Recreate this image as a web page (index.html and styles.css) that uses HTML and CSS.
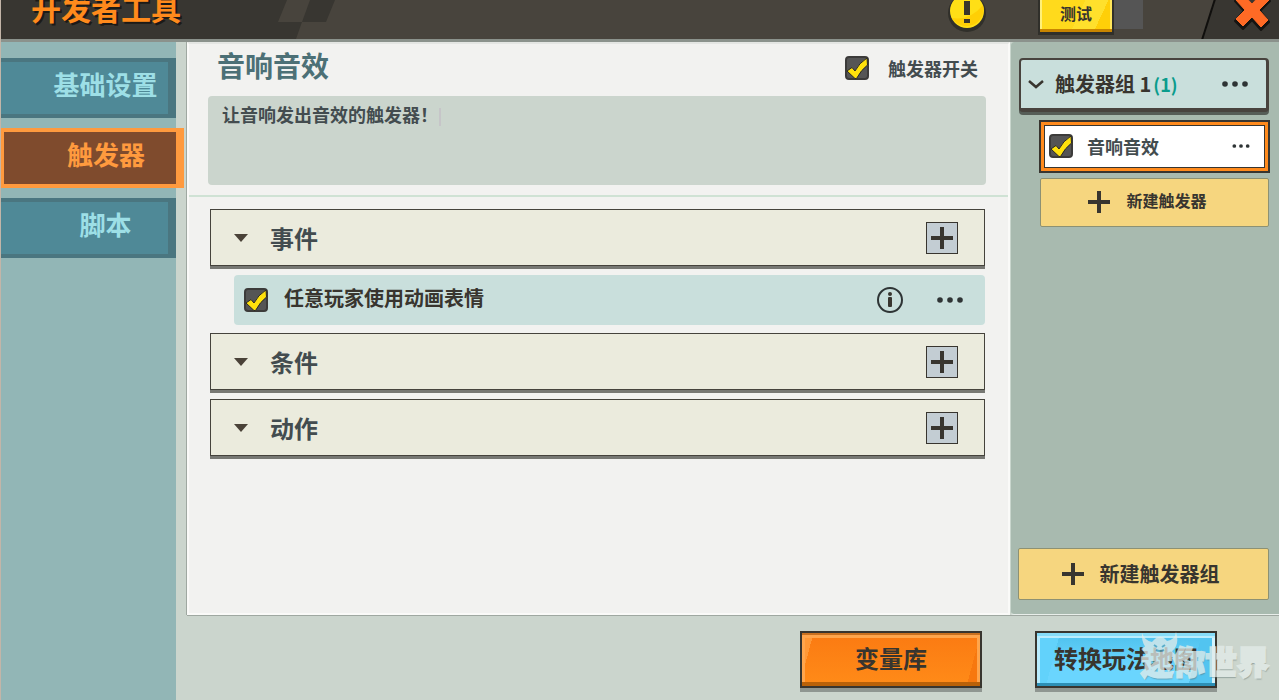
FILE: index.html
```
<!DOCTYPE html>
<html lang="zh-CN">
<head>
  <meta charset="UTF-8">
  <meta name="viewport" content="width=device-width, initial-scale=1.0">
  <title>开发者工具</title>
  <link rel="stylesheet" href="styles.css">
</head>
<body>
  <svg class="symbols" aria-hidden="true">
    <symbol id="tick" viewBox="0 0 24 24">
      <path d="M2 15L7 11.500L10 15Q14 7 22 2L22.500 9Q16 14 11.500 22.500L10 22.500Z" fill="#ffe10c" stroke="#2b2a26" stroke-width="1"/>
    </symbol>
    <symbol id="plus" viewBox="0 0 22 22">
      <path d="M9 0h4v9h9v4h-9v9h-4v-9H0V9h9z" fill="#38352f"/>
    </symbol>
    <symbol id="dots" viewBox="0 0 26 6">
      <circle cx="3" cy="3" r="2.800"/><circle cx="13" cy="3" r="2.800"/><circle cx="23" cy="3" r="2.800"/>
    </symbol>
    <symbol id="arrow" viewBox="0 0 14 8">
      <path d="M0 0h14L7 8z" fill="#4a4238"/>
    </symbol>
  </svg>

  <header class="topbar">
    <svg class="topbar-left" viewBox="0 0 334 39" aria-hidden="true">
      <path d="M0 0H286L277 22H301L309 0H334L325 22H301L295 39H0z" fill="#383631"/>
    </svg>
    <svg class="topbar-right" viewBox="0 0 78 39" aria-hidden="true">
      <path d="M14 0H78V39H1z" fill="#383631"/>
      <path d="M14 -1L1 40" stroke="#100f0d" stroke-width="2"/>
    </svg>
    <h1>开发者工具</h1>
    <div class="topbar-tools">
      <button type="button" class="alert-btn" aria-label="提示">
        <svg width="38" height="42" viewBox="0 0 38 42">
          <circle cx="19" cy="22" r="19" fill="#302f2a"/>
          <circle cx="19" cy="20" r="17" fill="#ffdf16"/>
          <path d="M4 27A17 17 0 0 0 35 14Q22 30 4 27z" fill="#ffcf05"/>
          <path d="M16 10h6v14h-6zM16 28h6v4h-6z" fill="#39352b"/>
        </svg>
      </button>
      <div class="test-slot">
        <button type="button" class="test-btn">测试</button>
      </div>
      <button type="button" class="close-btn" aria-label="关闭">
        <svg width="38" height="40" viewBox="0 0 38 40">
          <path d="M9 3L19 14L29 3L37 10L27 20L36 31L28 39L19 29L10 38L2 30L11 20L2 10z" fill="#151412" stroke="#151412" stroke-width="2" stroke-linejoin="round"/>
          <path d="M9 2L19 13L29 2L36 9L26 19L35 29L28 36L19 26L10 35L3 28L12 19L3 9z" fill="#ff6a25" stroke="#ff6a25" stroke-width="1" stroke-linejoin="round"/>
        </svg>
      </button>
    </div>
  </header>

  <div class="layout">
    <nav class="sidebar">
      <a href="#" class="nav-item">基础设置</a>
      <a href="#" class="nav-item active">触发器</a>
      <a href="#" class="nav-item">脚本</a>
    </nav>

    <div class="content">
      <div class="panels">
        <main class="editor">
          <div class="editor-head">
            <div class="editor-title">
              <h2>音响音效</h2>
              <label class="switch">
                <span class="check"><input type="checkbox" checked><svg><use href="#tick"/></svg></span>
                触发器开关
              </label>
            </div>
            <div class="desc">
              <textarea aria-label="触发器描述" spellcheck="false">让音响发出音效的触发器！</textarea>
              <span class="caret"></span>
            </div>
          </div>

          <div class="sections">
            <section class="section">
              <svg class="arrow"><use href="#arrow"/></svg>
              <h3>事件</h3>
              <button type="button" class="add-btn" aria-label="添加事件"><svg><use href="#plus"/></svg></button>
            </section>
            <div class="event">
              <label>
                <span class="check"><input type="checkbox" checked><svg><use href="#tick"/></svg></span>
                <span class="event-name">任意玩家使用动画表情</span>
              </label>
              <button type="button" class="icon-btn" aria-label="说明">
                <svg width="26" height="26" viewBox="0 0 26 26">
                  <circle cx="13" cy="13" r="12" fill="none" stroke="#2e3435" stroke-width="2"/>
                  <circle cx="13" cy="7" r="2" fill="#38352f"/>
                  <rect x="11" y="10" width="4" height="10" rx="1" fill="#38352f"/>
                </svg>
              </button>
              <button type="button" class="icon-btn" aria-label="更多"><svg class="dots"><use href="#dots"/></svg></button>
            </div>
            <section class="section">
              <svg class="arrow"><use href="#arrow"/></svg>
              <h3>条件</h3>
              <button type="button" class="add-btn" aria-label="添加条件"><svg><use href="#plus"/></svg></button>
            </section>
            <section class="section">
              <svg class="arrow"><use href="#arrow"/></svg>
              <h3>动作</h3>
              <button type="button" class="add-btn" aria-label="添加动作"><svg><use href="#plus"/></svg></button>
            </section>
          </div>
        </main>

        <aside class="groups">
          <div class="group-head">
            <svg width="16" height="10" viewBox="0 0 16 10"><path d="M1 2L8 8L15 2" fill="none" stroke="#38352f" stroke-width="2.500"/></svg>
            <h3>触发器组 1<span class="count">(1)</span></h3>
            <button type="button" class="icon-btn" aria-label="更多"><svg class="dots"><use href="#dots"/></svg></button>
          </div>
          <div class="trigger">
            <label>
              <span class="check"><input type="checkbox" checked><svg><use href="#tick"/></svg></span>
              音响音效
            </label>
            <button type="button" class="icon-btn" aria-label="更多"><svg class="dots small"><use href="#dots"/></svg></button>
          </div>
          <button type="button" class="new-btn new-trigger"><svg><use href="#plus"/></svg><span>新建触发器</span></button>
          <button type="button" class="new-btn new-group"><svg><use href="#plus"/></svg>新建触发器组</button>
        </aside>
      </div>

      <footer class="actions">
        <button type="button" class="action-btn orange">变量库</button>
        <button type="button" class="action-btn blue">转换玩法地图</button>
      </footer>
    </div>
  </div>

  <div class="watermark" aria-hidden="true">
    <svg width="38" height="26" viewBox="0 0 38 26">
      <path d="M1 1Q4 9 11 10Q19 0 26 9Q34 8 35 0Q39 13 31 19L36 25H3L8 19Q0 12 1 1z"/>
      <path class="face" d="M13 13l3 2M24 13l-3 2M15 18q4 2 8 0"/>
    </svg>
    <span>迷你世界</span>
  </div>
</body>
</html>
```
FILE: styles.css
```
* {
  margin: 0;
  padding: 0;
  box-sizing: border-box;
}

body {
  font-family: "Noto Sans CJK SC", sans-serif;
  font-weight: 700;
  color: #38352f;
  background: #cbd5cd;
  border-left: 1px solid #c3b5a8;
  min-height: 100vh;
  display: flex;
  flex-direction: column;
  position: relative;
}

h1,
h2,
h3 {
  font-weight: 700;
}

button {
  font: inherit;
  color: inherit;
  border: none;
  background: none;
  cursor: pointer;
}

.symbols {
  position: absolute;
  width: 0;
  height: 0;
}

/* Top bar */
.topbar {
  height: 39px;
  background: #48443d;
  display: flex;
  align-items: flex-end;
  justify-content: space-between;
  overflow: hidden;
  position: relative;
}

.topbar-left,
.topbar-right {
  position: absolute;
  top: 0;
  height: 39px;
}

.topbar-left {
  left: 0;
  width: 334px;
}

.topbar-right {
  right: 0;
  width: 78px;
}

.topbar h1 {
  position: relative;
  color: #ff8a1c;
  font-size: 30px;
  line-height: 30px;
  padding: 0 0 17px 30px;
  text-shadow: 2px 2px 0 #1c1a17;
}

.topbar-tools {
  position: relative;
  display: flex;
  align-items: flex-end;
  padding-right: 8px;
}

.alert-btn {
  height: 42px;
  margin: 0 52px 6px 0;
}

.test-slot {
  width: 105px;
  height: 48px;
  margin: 0 90px 4px 0;
  background: linear-gradient(#555, #555) 0 0 / 100% 42px no-repeat;
  border-radius: 3px;
}

.test-btn {
  width: 76px;
  height: 48px;
  font-size: 16px;
  line-height: 16px;
  padding-top: 4px;
  border: 2px solid #302f2a;
  border-bottom-width: 3px;
  background: linear-gradient(115deg, #ffda1c 55%, #ffe02c 55%, #ffe02c 80%, #ffcf08 80%);
  box-shadow: inset 0 -3px 0 #c98500, inset 2px 0 0 #fff07a, inset -2px 0 0 #ffe65a;
}

.close-btn {
  height: 40px;
  margin-bottom: 8px;
}

.alert-btn svg,
.close-btn svg {
  display: block;
}

/* Layout */
.layout {
  flex: 1;
  display: flex;
  border-top: 3px solid #8b928c;
}

.sidebar {
  width: 175px;
  background: #92b6b6;
  padding-top: 16px;
  display: flex;
  flex-direction: column;
  gap: 10px;
}

.nav-item {
  display: flex;
  align-items: center;
  justify-content: center;
  height: 60px;
  padding: 0 0 8px 42px;
  font-size: 26px;
  line-height: 26px;
  color: #9ddfe6;
  text-decoration: none;
  background: #4f8997;
  border: 4px solid #4a7680;
  border-left: none;
  border-right-width: 8px;
}

.nav-item.active {
  width: 183px;
  padding-left: 32px;
  color: #ff9a3e;
  background: #7f4b2d;
  border: 4px solid #ff9a3e;
  border-left-width: 3px;
  border-right-width: 8px;
}

.content {
  flex: 1;
  display: flex;
  flex-direction: column;
}

.panels {
  flex: 1;
  display: flex;
  margin-left: 11px;
  border-bottom: 1px solid #9fa8a1;
}

/* Checkbox */
.check {
  display: grid;
  width: 24px;
  height: 24px;
}

.check input,
.check svg {
  grid-area: 1 / 1;
  width: 24px;
  height: 24px;
}

.check input {
  appearance: none;
  background: #555;
  border: 2px solid #3c3b3a;
  border-radius: 4px;
}

.check svg {
  pointer-events: none;
  visibility: hidden;
}

.check input:checked + svg {
  visibility: visible;
}

/* Editor */
.editor {
  flex: 1;
  background: #f2f2f0;
  border: 2px solid #fafaf8;
  border-top-color: #e4e6e3;
  box-shadow: -1px 0 0 #9fa8a1;
}

.editor-head {
  padding: 0 22px 10px 19px;
  border-bottom: 2px solid #cfe2d4;
}

.editor-title {
  display: flex;
  align-items: center;
  justify-content: space-between;
  height: 52px;
  padding: 0 8px 4px 9px;
}

.editor-title h2 {
  font-size: 28px;
  line-height: 28px;
  padding-bottom: 6px;
  color: #4c7076;
}

.switch {
  display: flex;
  align-items: center;
  gap: 19px;
  font-size: 18px;
  line-height: 18px;
  color: #434c4f;
}

.desc {
  position: relative;
}

.desc textarea {
  display: block;
  width: 100%;
  height: 89px;
  padding: 6px 14px;
  border: none;
  border-radius: 4px;
  background: #cbd5cd;
  font: inherit;
  font-size: 18px;
  line-height: 24px;
  color: #434c4f;
  resize: none;
  outline: none;
}

.caret {
  position: absolute;
  left: 231px;
  top: 12px;
  width: 2px;
  height: 18px;
  background: #c6c5c8;
}

.sections {
  padding: 12px 23px 12px 21px;
}

.section {
  display: flex;
  align-items: center;
  height: 57px;
  margin-bottom: 9px;
  padding: 0 26px 0 23px;
  background: #ebebdd;
  border: 1px solid #45433c;
  box-shadow: 0 3px 0 #777873;
}

.arrow {
  width: 14px;
  height: 8px;
}

.section h3 {
  flex: 1;
  padding-left: 22px;
  font-size: 24px;
  line-height: 24px;
  color: #434c4f;
}

.add-btn {
  display: grid;
  place-items: center;
  width: 32px;
  height: 32px;
  background: #c3cdd3;
  border: 1px solid #38352f;
}

.add-btn svg {
  width: 22px;
  height: 22px;
}

.event {
  display: flex;
  align-items: center;
  gap: 34px;
  height: 50px;
  margin: 0 0 8px 24px;
  padding: 0 22px 0 10px;
  background: #c9dfdc;
  border-radius: 4px;
}

.event label {
  flex: 1;
  display: flex;
  align-items: center;
  gap: 16px;
  font-size: 20px;
  line-height: 20px;
}

.event-name {
  padding-bottom: 4px;
}

.icon-btn {
  display: grid;
  place-items: center;
}

.dots {
  width: 26px;
  height: 6px;
  fill: #2e3435;
}

.dots.small {
  width: 18px;
  height: 4px;
}

/* Trigger groups */
.groups {
  width: 269px;
  padding: 16px 10px 14px 8px;
  background: #a8baaf;
  border-left: 1px solid #c9d6cd;
  border-bottom: 1px solid #e8eeea;
  border-radius: 4px 0 0 4px;
  display: flex;
  flex-direction: column;
}

.group-head {
  display: flex;
  align-items: center;
  height: 54px;
  padding: 0 18px 0 7px;
  background: #c9dfdc;
  border: 2px solid #48433e;
  border-right-width: 3px;
  border-bottom-width: 4px;
  border-radius: 4px;
  box-shadow: 0 3px 0 #565d57;
}

.group-head h3 {
  flex: 1;
  padding-left: 11px;
  font-size: 20px;
  line-height: 20px;
}

.count {
  color: #0a9c8c;
  font-size: 18px;
  margin-left: 2px;
}

.trigger {
  display: flex;
  align-items: center;
  justify-content: space-between;
  height: 53px;
  margin: 8px -1px 5px 20px;
  padding: 0 18px 2px 8px;
  background: #fff;
  border: 2px solid #38352f;
  box-shadow: inset 0 0 0 3px #ff8a1c, inset 0 0 0 4px #38352f;
}

.trigger label {
  display: flex;
  align-items: center;
  gap: 14px;
  font-size: 18px;
  line-height: 18px;
  color: #434c4f;
}

.new-btn {
  display: flex;
  align-items: center;
  justify-content: center;
  background: #f6d67f;
  border: 1px solid #8d9173;
  border-radius: 2px;
}

.new-btn svg {
  width: 22px;
  height: 22px;
}

.new-trigger {
  height: 49px;
  margin-left: 21px;
  gap: 16px;
  padding: 0 14px 2px 0;
  font-size: 16px;
  line-height: 16px;
}

.new-trigger span {
  padding-bottom: 4px;
}

.new-group {
  height: 52px;
  margin-top: auto;
  margin-left: -1px;
  gap: 16px;
  padding-right: 6px;
  font-size: 20px;
  line-height: 20px;
}

/* Footer */
.actions {
  height: 84px;
  display: flex;
  justify-content: flex-end;
  align-items: flex-start;
  gap: 53px;
  padding: 15px 62px 0 0;
}

.action-btn {
  width: 182px;
  height: 57px;
  padding-bottom: 4px;
  font-size: 24px;
  line-height: 24px;
  border: 2px solid #38352f;
}

.action-btn.orange {
  background: linear-gradient(105deg, #ff9836 6%, transparent 6%, transparent 93%, #f7780f 93%), linear-gradient(#fb7a12, #ff8b18);
  box-shadow: inset 0 -4px 0 #b96109, inset 0 2px 0 #c9701f, inset 3px 5px 0 #ffa54c, inset -3px 0 0 #ffa54c, 0 4px 0 #8f9691;
}

.action-btn.blue {
  background: linear-gradient(105deg, #62d2fb 12%, transparent 12%, transparent 86%, #52c4f0 86%), linear-gradient(#4dc0ec, #6ad5fe 60%);
  box-shadow: inset 0 -3px 0 #2d8fb5, inset 0 3px 0 #86dcf8, inset 3px 5px 0 #b9ecfd, inset -3px 0 0 #d2f3fd, 0 4px 0 #8f9691;
}

/* Watermark over the lower right corner */
.watermark {
  position: absolute;
  right: 10px;
  bottom: 20px;
  pointer-events: none;
  font-size: 32px;
  line-height: 40px;
  font-weight: 900;
  color: #e4ece9;
  -webkit-text-stroke: 2px #e4ece9;
  text-shadow: 1px 2px 1px rgba(90, 110, 110, 0.6);
  opacity: 0.75;
}

.watermark svg {
  position: absolute;
  left: 0;
  top: -8px;
  fill: #e4ece9;
}

.watermark .face {
  fill: none;
  stroke: #5aa5bd;
  stroke-width: 2;
}
```
